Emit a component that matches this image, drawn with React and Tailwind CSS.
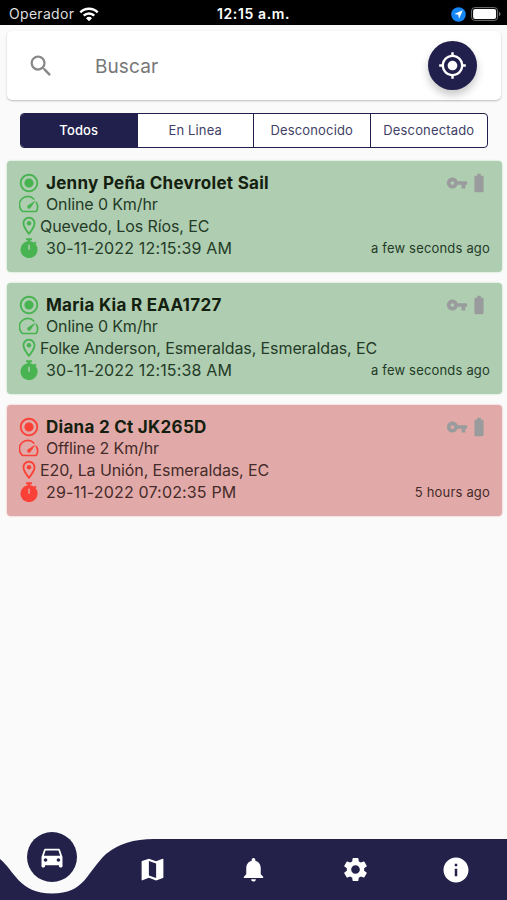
import React from "react";
import {
  MdSearch,
  MdGpsFixed,
  MdRadioButtonChecked,
  MdOutlineLocationOn,
  MdVpnKey,
  MdBatteryFull,
  MdDirectionsCar,
  MdMap,
  MdNotifications,
  MdSettings,
  MdInfo,
} from "react-icons/md";

const vehicles = [
  { name: "Jenny Peña Chevrolet Sail", status: "Online 0 Km/hr", place: "Quevedo, Los Ríos, EC", time: "30-11-2022 12:15:39 AM", ago: "a few seconds ago", online: true },
  { name: "Maria Kia R EAA1727", status: "Online 0 Km/hr", place: "Folke Anderson, Esmeraldas, Esmeraldas, EC", time: "30-11-2022 12:15:38 AM", ago: "a few seconds ago", online: true },
  { name: "Diana 2 Ct JK265D", status: "Offline 2 Km/hr", place: "E20, La Unión, Esmeraldas, EC", time: "29-11-2022 07:02:35 PM", ago: "5 hours ago", online: false },
];

function WifiIcon() {
  return (
    <svg width="20" height="15" viewBox="0 0 20 15" fill="none" stroke="white" strokeWidth="2.4">
      <path d="M1.3 5.3a12.3 12.3 0 0 1 17.4 0" />
      <path d="M4.7 8.7a7.5 7.5 0 0 1 10.6 0" />
      <path d="M10 14.2 7 11.2a4.3 4.3 0 0 1 6 0z" fill="white" stroke="none" />
    </svg>
  );
}

function GaugeIcon() {
  return (
    <svg width="20" height="20" viewBox="0 0 20 20" fill="none" stroke="currentColor" strokeWidth="1.7" strokeLinecap="round" strokeLinejoin="round">
      <path d="M14.8 4A8.3 8.3 0 0 0 2.7 15.6q.4.9 1.3.9h12.4q.9 0 1.3-.9A8.3 8.3 0 0 0 17.4 7.6" />
      <path d="M16.8 5.3 8.7 10.4a1.9 1.9 0 1 0 2.8 2.7z" fill="currentColor" stroke="none" />
    </svg>
  );
}

function StopwatchIcon() {
  return (
    <svg width="20" height="20" viewBox="0 0 20 20" fill="currentColor">
      <path fillRule="evenodd" d="M7.1.3h5.8v2h-1.7v.9a8.4 8.4 0 0 1 3.9 1.5l1.2-1.1 1.3 1.3-1.1 1.2A8.5 8.5 0 1 1 8.8 3.2v-.9H7.1zM9.3 7v4.2a.8.8 0 0 0 1.5 0V7a.8.8 0 0 0-1.5 0z" />
    </svg>
  );
}

function StatusBar() {
  return (
    <div className="grid h-[25px] grid-cols-3 items-center bg-black pt-[3px] text-white">
      <div className="flex items-center gap-[5px] pl-[9px] text-[14px] leading-none tracking-[0.3px] text-[#dedede]">
        Operador
        <WifiIcon />
      </div>
      <div className="text-center text-[14px] font-semibold leading-none tracking-[0.6px]">12:15 a.m.</div>
      <div className="flex items-center justify-end gap-[5px] pr-[6px]">
        <svg width="15" height="15" viewBox="0 0 15 15">
          <circle cx="7.5" cy="7.5" r="7.3" fill="#1687f8" />
          <path d="M11.8 3.2 3.3 7l4 .7.7 4z" fill="white" />
        </svg>
        <svg width="30" height="14" viewBox="0 0 30 14">
          <rect x=".6" y=".6" width="26" height="12.8" rx="3.2" fill="none" stroke="#777" />
          <rect x="2.1" y="2.1" width="23" height="9.8" rx="2" fill="white" />
          <path d="M28 4.8q1.6.8 1.6 2.2T28 9.2z" fill="#777" />
        </svg>
      </div>
    </div>
  );
}

function SearchBar() {
  return (
    <div className="ml-[7px] mr-[6px] mt-[6px] flex h-[69px] items-center rounded-[5px] bg-white pl-[20px] pr-[24px] shadow-[0_1px_2px_rgba(0,0,0,0.25)]">
      <MdSearch className="size-[28px] text-[#888]" />
      <span className="ml-[40px] flex-1 pt-[3px] text-[19px] tracking-[0.1px] text-[#777]">Buscar</span>
      <button className="flex size-[49px] items-center justify-center rounded-full bg-[#211f4b] text-white shadow-[0_5px_9px_rgba(0,0,0,0.22)]">
        <MdGpsFixed className="size-[29px]" />
      </button>
    </div>
  );
}

function Filters() {
  return (
    <div className="ml-[20px] mr-[19px] mt-[13px] grid h-[35px] grid-cols-4 divide-x divide-[#211f4b] overflow-hidden rounded-[4px] border border-[#211f4b] bg-white text-[13px] tracking-[0.15px] text-[#413f68]">
      <button className="bg-[#211f4b] font-medium text-white">Todos</button>
      <button>En Linea</button>
      <button>Desconocido</button>
      <button>Desconectado</button>
    </div>
  );
}

function VehicleCard({ v }) {
  const tone = v.online ? "text-[#48b351]" : "text-[#fa4137]";
  const card = v.online
    ? "bg-[#afcdb1] shadow-[0_0_2px_#a9d9ac]"
    : "bg-[#e1aaa8] shadow-[0_0_2px_#eaa9a6]";
  const text = v.online ? "text-[#243b27]" : "text-[#452b2a]";
  return (
    <article className={`h-[111px] rounded-[4px] pl-[12px] pr-[12px] pt-[11px] text-[16px] leading-[22px] ${card} ${text}`}>
      <div className="flex h-[22px] items-center">
        <MdRadioButtonChecked className={`size-[22px] -ml-px ${tone}`} />
        <h2 className="ml-[6px] flex-1 text-[17px] font-bold tracking-[0.28px] text-[#14200f]">{v.name}</h2>
        <MdVpnKey className="size-[22px] text-[#999b9c]" />
        <MdBatteryFull className="size-[22px] text-[#999b9c]" />
      </div>
      <div className="-mt-px flex h-[22px] items-center">
        <span className={`pt-px ${tone}`}><GaugeIcon /></span>
        <span className="ml-[7px] tracking-[-0.12px]">{v.status}</span>
      </div>
      <div className="flex h-[22px] items-center">
        <MdOutlineLocationOn className={`-ml-px size-[22px] ${tone}`} />
        <span className="tracking-[-0.1px]">{v.place}</span>
      </div>
      <div className="flex h-[22px] items-center">
        <span className={tone}><StopwatchIcon /></span>
        <span className="ml-[7px] flex-1 tracking-[0.16px]">{v.time}</span>
        <span className="text-[13px] tracking-[0.18px]">{v.ago}</span>
      </div>
    </article>
  );
}

function BottomNav() {
  return (
    <nav className="relative h-[61px] text-white">
      <svg className="absolute inset-0" width="507" height="61" viewBox="0 0 507 61">
        <path d="M0 20C14 31 19 54.5 52 54.5C85 54.5 86 34 106 15Q124 0 154 0H507V61H0z" fill="#232149" />
      </svg>
      <div className="relative grid h-full grid-cols-5 pl-px">
        <div className="flex justify-center">
          <div className="-mt-[7px] flex size-[50px] items-center justify-center rounded-full bg-[#232149]">
            <MdDirectionsCar className="size-[28px]" />
          </div>
        </div>
        <div className="flex items-center justify-center"><MdMap className="size-[29px]" /></div>
        <div className="flex items-center justify-center"><MdNotifications className="size-[29px]" /></div>
        <div className="flex items-center justify-center"><MdSettings className="size-[29px]" /></div>
        <div className="flex items-center justify-center"><MdInfo className="size-[30px]" /></div>
      </div>
    </nav>
  );
}

export default function App() {
  return (
    <div className="flex h-[900px] w-[507px] flex-col overflow-hidden bg-[#fafafa] font-['Inter',sans-serif]">
      <StatusBar />
      <SearchBar />
      <Filters />
      <main className="ml-[7px] mr-[5px] mt-[13px] flex flex-1 flex-col gap-[11px]">
        {vehicles.map((v) => (
          <VehicleCard key={v.name} v={v} />
        ))}
      </main>
      <BottomNav />
    </div>
  );
}
